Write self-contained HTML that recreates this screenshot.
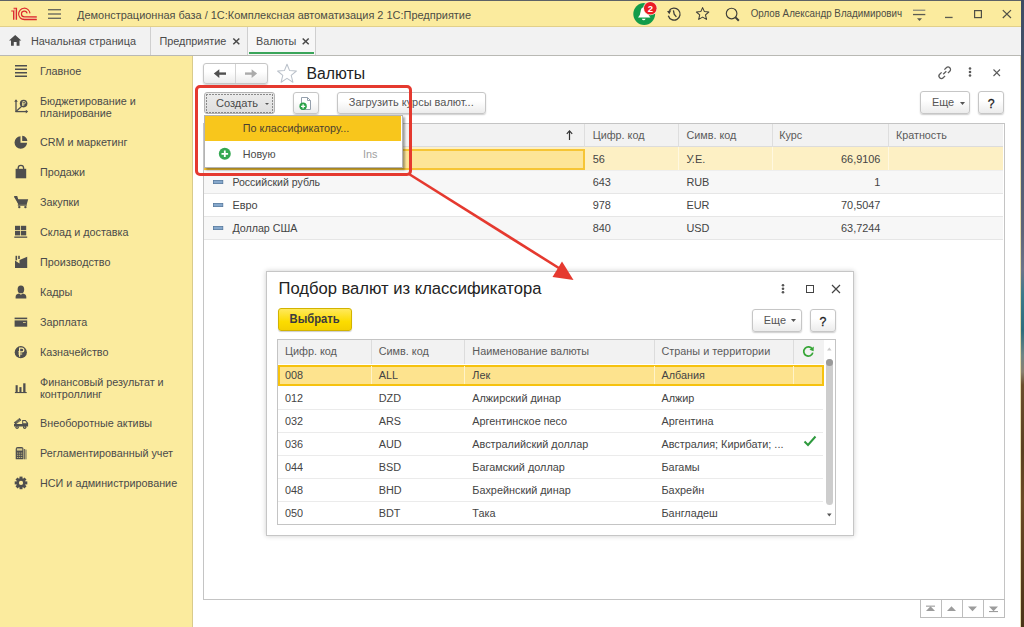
<!DOCTYPE html>
<html><head><meta charset="utf-8">
<style>
*{margin:0;padding:0;box-sizing:border-box}
html,body{width:1024px;height:627px;overflow:hidden;background:#fff;font-family:"Liberation Sans",sans-serif;color:#4a4a4a}
.a{position:absolute}
.t{position:absolute;white-space:nowrap;line-height:1;transform:scaleY(1.06);transform-origin:0 84.65%}
.nb{transform:none}
svg{position:absolute;overflow:visible}
#topline{left:0;top:0;width:1024px;height:1px;background:#5d6266}
#hdr{left:0;top:1px;width:1021px;height:26px;background:#fbeb9e;border-bottom:1px solid #e2d08a}
#tabs{left:0;top:27px;width:1021px;height:29px;background:#f2f2f2;border-bottom:1px solid #b9b9b4}
#side{left:0;top:56px;width:193px;height:571px;background:#fbeb9e;border-right:1px solid #d9cb8c}
#rstrip{left:1021px;top:0;width:3px;height:627px;background:linear-gradient(#3d4b63 0px,#475770 120px,#5e6478 230px,#6c7489 270px,#3b7a8a 295px,#2d6d7d 330px,#6f8585 355px,#8a8070 372px,#6a4e2c 385px,#5a4020 450px,#6b4a25 500px,#4a3418 627px)}
#rline{left:1020px;top:56px;width:1px;height:571px;background:#e4dcb0}
.side .t{font-size:10.8px;color:#4a4a4a}
.btn{position:absolute;border:1px solid #c6c6c6;border-radius:3px;background:linear-gradient(#fff 40%,#ececec);box-shadow:0 1px 1.5px rgba(0,0,0,.2)}
.th{font-size:10.7px;color:#5a5a5a}
.td{font-size:10.7px;color:#444}
</style></head><body>
<div class="a" id="topline"></div>
<div class="a" id="hdr"></div>
<div class="a" id="tabs"></div>
<div class="a" id="side"></div>
<div class="a" id="rline"></div>
<div class="a" id="rstrip"></div>

<!-- header -->
<svg style="left:0;top:0" width="40" height="27" viewBox="0 0 40 27">
 <path d="M13.6 8.2 H16.5 V19.6 H13.6 Z" fill="#f0b38a"/>
 <path d="M24.3 16.8 H36.7 V19.6 H24.3 A5.7 5.7 0 0 1 22 19 Z" fill="#f0b38a"/>
 <g fill="none" stroke="#dc2a2e" stroke-width="1.15">
  <path d="M11.2 11 H13.6 V19.7"/>
  <path d="M13.6 8.2 H16.5 V19.7"/>
  <path d="M30 13.4 A5.7 5.7 0 1 0 24.3 19.6 H36.8"/>
  <path d="M27.1 13.4 A2.85 2.85 0 1 0 24.3 16.8 H36.8"/>
 </g>
</svg>
<svg style="left:48px;top:9px" width="14" height="11"><g fill="#6b6b5e"><rect x="0" y="0" width="13" height="1.4"/><rect x="0" y="4.3" width="13" height="1.4"/><rect x="0" y="8.6" width="13" height="1.4"/></g></svg>
<div class="t" style="left:77px;top:9.9px;font-size:10.96px;color:#4d4d45">Демонстрационная база / 1С:Комплексная автоматизация 2 1С:Предприятие</div>

<svg style="left:0;top:0" width="1024" height="27" viewBox="0 0 1024 27">
 <circle cx="644.2" cy="14" r="10.9" fill="#129c4a"/>
 <path d="M638 17.6 Q640.3 15.5 640.6 11.5 Q640.9 7.2 644.2 7.2 Q647.5 7.2 647.8 11.5 Q648.1 15.5 650.4 17.6 Z" fill="#fff"/>
 <path d="M641.8 18.7 H645.6 Q645 20.2 643.7 20.2 Q642.4 20.2 641.8 18.7 Z" fill="#fff"/>
 <circle cx="650.3" cy="8.2" r="7" fill="#f4f0d8"/>
 <circle cx="650.3" cy="8.2" r="6.3" fill="#ec1c24"/>
 <text x="650.4" y="11.6" font-size="9.5" font-weight="bold" fill="#fff" text-anchor="middle" font-family="Liberation Sans">2</text>
 <g fill="none" stroke="#3f3f3a" stroke-width="1.3">
  <path d="M669.2 10.6 A6 6 0 1 1 668.3 15.8"/>
  <path d="M673.4 10.3 L674.2 14.2 L676.4 16.8"/>
  <path d="M702.6 7.6 L704.4 11.6 L708.8 12 L705.5 14.9 L706.5 19.4 L702.6 17.1 L698.7 19.4 L699.7 14.9 L696.4 12 L700.8 11.6 Z" stroke-width="1.05" stroke-linejoin="round"/>
  <circle cx="731.6" cy="13.5" r="5.3" stroke-width="1.15"/>
 </g>
 <path d="M667 11.2 L671.3 10.2 L669.4 14.2 Z" fill="#3f3f3a"/>
 <path d="M735.5 17.4 L738.8 20.7" stroke="#3f3f3a" stroke-width="2"/>
 <g fill="#5b5b52">
  <rect x="913" y="9.6" width="12.3" height="1.3" fill="#8a8a78"/>
  <rect x="913" y="13.9" width="12.3" height="1.3"/>
  <path d="M917 18.2 H922 L919.5 21 Z"/>
  <rect x="945" y="16.8" width="7.6" height="1.3"/>
 </g>
 <rect x="974.6" y="10.6" width="6.8" height="7" fill="none" stroke="#4f4f46" stroke-width="1.2"/>
 <path d="M1002.8 10.1 L1011 18 M1011 10.1 L1002.8 18" stroke="#4f4f46" stroke-width="1.2"/>
</svg>
<div class="t" style="left:750.7px;top:9.4px;font-size:9.8px;color:#4d4d45">Орлов Александр Владимирович</div>

<!-- tabs -->
<svg style="left:9px;top:35px" width="13" height="11" viewBox="0 0 13 11"><path d="M6.2 0 L12.3 5.5 H10.5 V10.7 H7.6 V7 H4.8 V10.7 H2 V5.5 H0 Z" fill="#4a4a4a"/></svg>
<div class="t" style="left:31px;top:36.1px;font-size:10.85px;color:#4a4a4a">Начальная страница</div>
<div class="a" style="left:150px;top:27px;width:1px;height:28px;background:#cfcfcf"></div>
<div class="t" style="left:159.5px;top:36.1px;font-size:10.85px;color:#4a4a4a">Предприятие</div>
<svg style="left:232px;top:37px" width="9" height="9"><path d="M1.3 1.5 L7.3 7.3 M7.3 1.5 L1.3 7.3" stroke="#4a4a4a" stroke-width="1.5"/></svg>
<div class="a" style="left:247px;top:27px;width:69px;height:28px;background:#f7f7f7;border-left:1px solid #cfcfcf;border-right:1px solid #cfcfcf"></div>
<div class="a" style="left:248.5px;top:52px;width:65px;height:2px;background:#3aa55a"></div>
<div class="t" style="left:256px;top:36.1px;font-size:10.85px;color:#4a4a4a">Валюты</div>
<svg style="left:302px;top:37px" width="9" height="9"><path d="M0.7 1.5 L6.7 7.3 M6.7 1.5 L0.7 7.3" stroke="#4a4a4a" stroke-width="1.5"/></svg>

<!-- sidebar -->
<div class="side">
<div class="t" style="left:40px;top:65.8px">Главное</div>
<div class="t" style="left:40px;top:95.6px">Бюджетирование и</div>
<div class="t" style="left:40px;top:107.8px">планирование</div>
<div class="t" style="left:40px;top:136.9px">CRM и маркетинг</div>
<div class="t" style="left:40px;top:167.0px">Продажи</div>
<div class="t" style="left:40px;top:197.2px">Закупки</div>
<div class="t" style="left:40px;top:227.0px">Склад и доставка</div>
<div class="t" style="left:40px;top:257.1px">Производство</div>
<div class="t" style="left:40px;top:287.4px">Кадры</div>
<div class="t" style="left:40px;top:317.2px">Зарплата</div>
<div class="t" style="left:40px;top:347.2px">Казначейство</div>
<div class="t" style="left:40px;top:376.6px">Финансовый результат и</div>
<div class="t" style="left:40px;top:389.4px">контроллинг</div>
<div class="t" style="left:40px;top:418.0px">Внеоборотные активы</div>
<div class="t" style="left:40px;top:448.1px">Регламентированный учет</div>
<div class="t" style="left:40px;top:478.4px">НСИ и администрирование</div>
</div>



<!-- sidebar icons -->
<svg style="left:0;top:0" width="193" height="627">
<g fill="#4e4e4e">
 <!-- Главное -->
 <rect x="15" y="65" width="12" height="1.5"/><rect x="15" y="68.5" width="12" height="1.5"/><rect x="15" y="72" width="12" height="1.5"/><rect x="15" y="75.5" width="12" height="1.5"/>
 <!-- budget -->
 <path d="M16 112 V100.5" stroke="#4e4e4e" stroke-width="1.3"/><path d="M14.2 101.8 L16 99.2 L17.8 101.8 Z"/>
 <path d="M15.5 111.6 H26.5" stroke="#4e4e4e" stroke-width="1.3"/><path d="M25.8 109.8 L28.2 111.6 L25.8 113.4 Z"/>
 <path d="M16 111.5 L22 106" stroke="#4e4e4e" stroke-width="1.1"/>
 <circle cx="23.6" cy="103.6" r="3.8"/>
 <path d="M22.8 106 V101.6 H24.3 A1.1 1.1 0 0 1 24.3 103.8 H22 M22 105 H24.4" stroke="#fbeb9e" stroke-width="0.8" fill="none"/>
 <!-- pie -->
 <path d="M20.5 136.2 V142.8 H27.1 A6.3 6.3 0 1 1 20.5 136.2 Z"/>
 <path d="M22.2 135.8 A6 6 0 0 1 27.4 141.1 H22.2 Z"/>
 <!-- bag -->
 <path d="M15.6 168.8 H26.2 V178.3 H15.6 Z"/>
 <path d="M18.2 170 V168 A2.7 2.7 0 0 1 23.6 168 V170" fill="none" stroke="#4e4e4e" stroke-width="1.3"/>
 <!-- cart -->
 <path d="M14 196.8 H16.6 L17.6 199.3 H28.2 L26.6 204.8 H18.6 Z"/>
 <path d="M14.2 196.6 H16.8 L19 204.5" fill="none" stroke="#4e4e4e" stroke-width="1.2"/>
 <rect x="17.8" y="204.5" width="9" height="1.2"/>
 <circle cx="19.3" cy="207.1" r="1.2"/><circle cx="25.4" cy="207.1" r="1.2"/>
 <!-- sklad -->
 <rect x="15" y="225.8" width="5.2" height="4.4"/><rect x="21" y="225.8" width="5.2" height="4.4"/>
 <rect x="15" y="231" width="5.2" height="4.4"/><rect x="21" y="231" width="5.2" height="4.4"/>
 <rect x="14.3" y="236.5" width="12.9" height="1.3"/>
 <!-- factory -->
 <path d="M15 268 V260.5 L19.5 263.5 V260 L27.2 256.8 V268 Z"/>
 <rect x="15.5" y="255.8" width="1.6" height="4.5"/><rect x="18.2" y="255.8" width="1.6" height="3.2"/>
 <!-- person -->
 <path d="M17.6 289.4 A3.3 3.9 0 0 1 24.2 289.4 A3.3 3.9 0 0 1 17.6 289.4 Z"/>
 <path d="M15.6 298.4 V296.8 Q15.8 294.2 19 293.6 L20.9 294.8 L22.8 293.6 Q26 294.2 26.3 296.8 V298.4 Z"/>
 <!-- card -->
 <rect x="14.6" y="317.6" width="12.6" height="1.6"/>
 <path d="M14.6 320.4 H27.2 V326.7 H14.6 Z"/>
 <rect x="23" y="322" width="2.8" height="1" fill="#c9bd85"/>
 <!-- ruble coin -->
 <circle cx="20.8" cy="352.2" r="6.1"/>
 <path d="M19.6 356.8 V348.1 H21.9 A1.9 1.9 0 0 1 21.9 351.9 H18.3 M18.3 354 H22.2" fill="none" stroke="#fbeb9e" stroke-width="1.2"/>
 <!-- bars -->
 <rect x="15.6" y="385.2" width="2.1" height="7"/><rect x="19.4" y="387.1" width="2.1" height="5.1"/><rect x="23.2" y="383.3" width="2.3" height="8.9"/>
 <rect x="14.9" y="392" width="11.8" height="1.1"/>
 <!-- truck -->
 <path d="M13.9 422.6 L19.6 417.9 L21.3 420.3 L15.6 424.6 Z"/>
 <path d="M15.6 421.6 L19 418.9 M16.5 422.8 L20 420" stroke="#bdb27c" stroke-width="0.5"/>
 <path d="M22.2 420 H25.6 L28.1 423 V426.4 H14 V424 H22.2 Z"/>
 <path d="M23.2 421 H25.2 L26.8 423.2 H23.2 Z" fill="#f1e29a"/>
 <circle cx="17.1" cy="427.2" r="1.7"/><circle cx="24.7" cy="427.2" r="1.7"/>
 <circle cx="17.1" cy="427.2" r="0.6" fill="#d8cc8e"/><circle cx="24.7" cy="427.2" r="0.6" fill="#d8cc8e"/>
 <!-- calculator -->
 <path d="M15.7 449 Q15.7 447 17.7 447 H21.5 Q23.5 447 23.5 449 V459.3 H15.7 Z"/>
 <rect x="16.9" y="448.4" width="5.4" height="2.2" fill="#d8cc8e"/>
 <g fill="#bdb27c"><rect x="17" y="452.6" width="1.3" height="1"/><rect x="19" y="452.6" width="1.3" height="1"/><rect x="21" y="452.6" width="1.3" height="1"/>
 <rect x="17" y="454.8" width="1.3" height="1"/><rect x="19" y="454.8" width="1.3" height="1"/><rect x="21" y="454.8" width="1.3" height="1"/>
 <rect x="17" y="457" width="1.3" height="1"/><rect x="19" y="457" width="1.3" height="1"/><rect x="21" y="457" width="1.3" height="1"/></g>
 <rect x="24.2" y="449" width="0.9" height="10.3"/><rect x="25.6" y="449.6" width="0.8" height="9.7"/>
 <!-- gear -->
 <g transform="translate(21 482.9)">
  <circle r="4.6"/>
  <g><rect x="-1.5" y="-6.3" width="3" height="12.6"/><rect x="-1.5" y="-6.3" width="3" height="12.6" transform="rotate(45)"/><rect x="-1.5" y="-6.3" width="3" height="12.6" transform="rotate(90)"/><rect x="-1.5" y="-6.3" width="3" height="12.6" transform="rotate(135)"/></g>
  <circle r="2.1" fill="#fbeb9e"/>
 </g>
</g>
</svg>

<!-- main form -->
<div class="btn" style="left:203px;top:63px;width:65px;height:21px;border-radius:3px"></div>
<div class="a" style="left:235px;top:64px;width:1px;height:19px;background:#d4d4d4"></div>
<svg style="left:0;top:0" width="300" height="100"><path d="M218 73.6 H226" stroke="#505050" stroke-width="2.4"/><path d="M213.8 73.6 L219.3 69.2 V78 Z" fill="#505050"/><path d="M245 73.6 H253" stroke="#ababab" stroke-width="2.4"/><path d="M257.1 73.6 L251.6 69.2 V78 Z" fill="#ababab"/></svg>
<svg style="left:276px;top:63px" width="22" height="21" viewBox="0 0 22 21"><path d="M11 1.2 L13.6 7.6 L20.4 8 L15.2 12.4 L16.9 19.2 L11 15.4 L5.1 19.2 L6.8 12.4 L1.6 8 L8.4 7.6 Z" fill="none" stroke="#bac1ca" stroke-width="1.05" stroke-linejoin="round"/></svg>
<div class="t nb" style="left:306.5px;top:65.9px;font-size:15.8px;color:#222">Валюты</div>
<svg style="left:937px;top:65px" width="16" height="16" viewBox="0 0 16 16"><g fill="none" stroke="#5c5c5c" stroke-width="1.25"><path d="M6.2 9.3 L9.3 6.2"/><path d="M7.4 4.6 L9.3 2.7 A2.4 2.4 0 0 1 12.8 6.2 L10.9 8.1"/><path d="M8.1 10.9 L6.2 12.8 A2.4 2.4 0 0 1 2.7 9.3 L4.6 7.4"/></g></svg>
<svg style="left:968px;top:67px" width="5" height="11"><g fill="#5a5a5a"><circle cx="2" cy="1.5" r="1.3"/><circle cx="2" cy="5" r="1.3"/><circle cx="2" cy="8.5" r="1.3"/></g></svg>
<svg style="left:993px;top:69px" width="8" height="8"><path d="M0.5 0.5 L7 7 M7 0.5 L0.5 7" stroke="#5a5a5a" stroke-width="1.1"/></svg>

<div class="a" style="left:204px;top:92px;width:71px;height:22px;border:1px solid #b4b4b4;border-radius:3px;background:linear-gradient(#ececec,#dedede)"></div>
<div class="a" style="left:206px;top:94px;width:67px;height:1px;background:repeating-linear-gradient(90deg,#8a8a8a 0 2px,transparent 2px 3px)"></div>
<div class="a" style="left:206px;top:112px;width:67px;height:1px;background:repeating-linear-gradient(90deg,#8a8a8a 0 2px,transparent 2px 3px)"></div>
<div class="a" style="left:206px;top:94px;width:1px;height:19px;background:repeating-linear-gradient(180deg,#8a8a8a 0 2px,transparent 2px 3px)"></div>
<div class="a" style="left:272px;top:94px;width:1px;height:19px;background:repeating-linear-gradient(180deg,#8a8a8a 0 2px,transparent 2px 3px)"></div>
<div class="t" style="left:215.9px;top:97.5px;font-size:11.08px;color:#4a4a4a">Создать</div>
<svg style="left:265px;top:102.5px" width="5" height="3"><path d="M0 0 H4 L2 2 Z" fill="#555"/></svg>
<div class="btn" style="left:293px;top:92px;width:26px;height:22px"></div>
<svg style="left:296px;top:95px" width="18" height="17" viewBox="0 0 18 17"><path d="M5.5 2.5 H11.5 L14.5 5.5 V14.5 H5.5 Z" fill="#fff" stroke="#95a0ad" stroke-width="1"/><path d="M11.5 2.5 V5.5 H14.5" fill="none" stroke="#95a0ad"/><circle cx="7.1" cy="11.3" r="3.7" fill="#2aa249"/><path d="M7.1 9.2 V13.4 M5 11.3 H9.2" stroke="#fff" stroke-width="1.3"/></svg>
<div class="btn" style="left:337px;top:92px;width:149px;height:22px"></div>
<div class="t" style="left:348.8px;top:97.3px;font-size:10.96px;color:#555">Загрузить курсы валют...</div>
<div class="btn" style="left:920px;top:91px;width:50px;height:23px"></div>
<div class="t" style="left:932px;top:97.3px;font-size:10.9px;color:#555">Еще</div>
<svg style="left:960px;top:102px" width="6" height="4"><path d="M0 0 H5 L2.5 3 Z" fill="#555"/></svg>
<div class="btn" style="left:978px;top:91px;width:26px;height:23px"></div>
<div class="t" style="left:987.8px;top:98.2px;font-size:12.3px;color:#1a1a1a;-webkit-text-stroke:0.25px #1a1a1a">?</div>

<!-- table -->
<div class="a" style="left:203px;top:123px;width:802px;height:477px;border:1px solid #c4c4c4;background:#fff"></div>
<div class="a" style="left:204px;top:124px;width:799px;height:23px;background:#f2f2f2;border-bottom:1px solid #dcdcdc"></div>
<div class="a" style="left:584px;top:124px;width:1px;height:23px;background:#dedede"></div>
<div class="a" style="left:678px;top:124px;width:1px;height:23px;background:#dedede"></div>
<div class="a" style="left:772px;top:124px;width:1px;height:23px;background:#dedede"></div>
<div class="a" style="left:888px;top:124px;width:1px;height:23px;background:#dedede"></div>
<svg style="left:566px;top:130px" width="7" height="11"><path d="M3.5 1 V10" stroke="#333" stroke-width="1.2"/><path d="M0.8 3.8 L3.5 0.8 L6.2 3.8" fill="none" stroke="#333" stroke-width="1.2"/></svg>
<div class="t th" style="left:592.7px;top:129.8px;font-size:10.8px">Цифр. код</div>
<div class="t th" style="left:686.4px;top:129.8px;font-size:10.8px">Симв. код</div>
<div class="t th" style="left:779.3px;top:129.8px;font-size:10.8px">Курс</div>
<div class="t th" style="left:895.9px;top:129.8px;font-size:10.8px">Кратность</div>

<div class="a" style="left:204px;top:147px;width:799px;height:24px;background:#fdf0c4;border-bottom:1px solid #eee"></div>
<div class="a" style="left:204px;top:148.6px;width:381px;height:21px;background:#fde597;border:2px solid #f6c535"></div>
<div class="a" style="left:678px;top:147px;width:1px;height:23px;background:#fff8e0"></div>
<div class="a" style="left:772px;top:147px;width:1px;height:23px;background:#fff8e0"></div>
<div class="a" style="left:888px;top:147px;width:1px;height:23px;background:#fff8e0"></div>
<div class="a" style="left:204px;top:171px;width:799px;height:23px;background:#f7f7f7;border-bottom:1px solid #e6e6e6"></div>
<div class="a" style="left:204px;top:194px;width:799px;height:23px;background:#fff;border-bottom:1px solid #e6e6e6"></div>
<div class="a" style="left:204px;top:217px;width:799px;height:23px;background:#f7f7f7;border-bottom:1px solid #e6e6e6"></div>

<div class="t td" style="left:592.7px;top:153.8px;font-size:10.9px">56</div>
<div class="t td" style="left:686.4px;top:153.8px;font-size:10.9px">У.Е.</div>
<div class="t td" style="left:780px;top:153.8px;width:100.4px;text-align:right;font-size:10.9px">66,9106</div>

<svg style="left:213px;top:180px" width="12" height="6"><rect x="0.4" y="0.4" width="9.4" height="3.2" fill="#86a8cc" stroke="#56789e" stroke-width="0.8"/></svg>
<div class="t td" style="left:232.4px;top:177px;font-size:10.56px">Российский рубль</div>
<div class="t td" style="left:592.7px;top:176.6px;font-size:10.9px">643</div>
<div class="t td" style="left:686.4px;top:176.6px;font-size:10.9px">RUB</div>
<div class="t td" style="left:780px;top:176.6px;width:100.4px;text-align:right;font-size:10.9px">1</div>

<svg style="left:213px;top:203px" width="12" height="6"><rect x="0.4" y="0.4" width="9.4" height="3.2" fill="#86a8cc" stroke="#56789e" stroke-width="0.8"/></svg>
<div class="t td" style="left:232.4px;top:200px;font-size:10.9px">Евро</div>
<div class="t td" style="left:592.7px;top:199.7px;font-size:10.9px">978</div>
<div class="t td" style="left:686.4px;top:199.7px;font-size:10.9px">EUR</div>
<div class="t td" style="left:780px;top:199.7px;width:100.4px;text-align:right;font-size:10.9px">70,5047</div>

<svg style="left:213px;top:226px" width="12" height="6"><rect x="0.4" y="0.4" width="9.4" height="3.2" fill="#86a8cc" stroke="#56789e" stroke-width="0.8"/></svg>
<div class="t td" style="left:232.4px;top:223px;font-size:10.7px">Доллар США</div>
<div class="t td" style="left:592.7px;top:222.7px;font-size:10.9px">840</div>
<div class="t td" style="left:686.4px;top:222.7px;font-size:10.9px">USD</div>
<div class="t td" style="left:780px;top:222.7px;width:100.4px;text-align:right;font-size:10.9px">63,7244</div>

<!-- bottom nav -->
<div class="a" style="left:920px;top:599px;width:85px;height:19px;border:1px solid #bdbdbd;background:#fff"></div>
<div class="a" style="left:941px;top:599px;width:1px;height:19px;background:#bdbdbd"></div>
<div class="a" style="left:962px;top:599px;width:1px;height:19px;background:#bdbdbd"></div>
<div class="a" style="left:983px;top:599px;width:1px;height:19px;background:#bdbdbd"></div>
<svg style="left:0;top:0" width="1024" height="627"><g fill="#9c9c9c">
<rect x="926" y="605.6" width="9" height="1.1"/><path d="M926 611 L930.5 606.2 L935 611 Z"/>
<path d="M947 611 L951.5 606.2 L956 611 Z"/>
<path d="M968 606.5 L972.5 611.2 L977 606.5 Z"/>
<path d="M989 606.5 L993.5 611.2 L998 606.5 Z"/><rect x="989" y="611" width="9" height="1.1"/>
</g></svg>
<!-- dropdown menu -->
<div class="a" style="left:203.5px;top:115px;width:199px;height:53px;background:#fff;border:1px solid #b4b4b4;box-shadow:2px 2px 2px rgba(0,0,0,.35)"></div>
<div class="a" style="left:205px;top:116px;width:196px;height:25px;background:#f8c61c"></div>
<div class="t" style="left:242.8px;top:122.8px;font-size:10.8px;color:#4a4030">По классификатору...</div>
<svg style="left:218px;top:147.2px" width="14" height="14"><circle cx="6.8" cy="6.8" r="6" fill="#35a853"/><path d="M6.8 3.5 V10.1 M3.5 6.8 H10.1" stroke="#fff" stroke-width="1.8"/></svg>
<div class="t" style="left:242.8px;top:148.8px;font-size:10.8px;color:#4a4a4a">Новую</div>
<div class="t" style="left:363px;top:148.8px;font-size:10.8px;color:#a0a0a0">Ins</div>


<!-- dialog -->
<div class="a" style="left:266px;top:270.5px;width:588px;height:265px;background:#fff;border:1px solid #c6c6c6;box-shadow:0 0 5px rgba(0,0,0,.2)"></div>
<div class="t nb" style="left:278.5px;top:281.3px;font-size:16.58px;color:#222">Подбор валют из классификатора</div>
<svg style="left:781px;top:283px" width="5" height="11"><g fill="#555"><circle cx="2" cy="2.2" r="1.3"/><circle cx="2" cy="5.7" r="1.3"/><circle cx="2" cy="9.2" r="1.3"/></g></svg>
<div class="a" style="left:806px;top:285px;width:8px;height:8px;border:1.3px solid #444"></div>
<svg style="left:831px;top:284px" width="10" height="10"><path d="M1 1 L9 9 M9 1 L1 9" stroke="#444" stroke-width="1.2"/></svg>
<div class="a" style="left:277.5px;top:308px;width:74.5px;height:23px;border:1px solid #d2b300;border-radius:3px;background:linear-gradient(#ffe95c,#fcdc00 60%,#f4d000);box-shadow:0 1px 1px rgba(0,0,0,.2)"></div>
<div class="t" style="left:289.6px;top:313.8px;font-size:11.2px;font-weight:bold;color:#3a3a40">Выбрать</div>
<div class="btn" style="left:752px;top:308.5px;width:50px;height:23px"></div>
<div class="t" style="left:763.8px;top:314.6px;font-size:10.9px;color:#555">Еще</div>
<svg style="left:791px;top:319px" width="6" height="4"><path d="M0 0 H5 L2.5 3 Z" fill="#555"/></svg>
<div class="btn" style="left:810px;top:308.5px;width:26px;height:23px"></div>
<div class="t" style="left:819.4px;top:315.8px;font-size:12.3px;color:#1a1a1a;-webkit-text-stroke:0.25px #1a1a1a">?</div>

<div class="a" style="left:277px;top:339px;width:559px;height:186px;border:1px solid #c4c4c4;background:#fff"></div>
<div class="a" style="left:278px;top:340px;width:546px;height:23.5px;background:#f2f2f2"></div>
<div class="a" style="left:371px;top:340px;width:1px;height:24px;background:#dcdcdc"></div>
<div class="a" style="left:464px;top:340px;width:1px;height:24px;background:#dcdcdc"></div>
<div class="a" style="left:654px;top:340px;width:1px;height:24px;background:#dcdcdc"></div>
<div class="a" style="left:793px;top:340px;width:1px;height:24px;background:#dcdcdc"></div>
<div class="t th" style="left:284.9px;top:346.3px;font-size:10.85px">Цифр. код</div>
<div class="t th" style="left:378.7px;top:346.3px;font-size:10.85px">Симв. код</div>
<div class="t th" style="left:472.3px;top:346.3px;font-size:10.85px">Наименование валюты</div>
<div class="t th" style="left:661.5px;top:346.3px;font-size:10.85px">Страны и территории</div>
<svg style="left:802px;top:345px" width="13" height="13" viewBox="0 0 13 13"><path d="M10.3 4.2 A4.6 4.6 0 1 0 10.8 7.6" fill="none" stroke="#35a535" stroke-width="1.7"/><path d="M7.5 4.8 L11.8 1.5 L11.6 6.2 Z" fill="#35a535"/></svg>
<div class="a" style="left:278px;top:409px;width:545px;height:1px;background:#ebebeb"></div>
<div class="a" style="left:278px;top:432px;width:545px;height:1px;background:#ebebeb"></div>
<div class="a" style="left:278px;top:455px;width:545px;height:1px;background:#ebebeb"></div>
<div class="a" style="left:278px;top:478px;width:545px;height:1px;background:#ebebeb"></div>
<div class="a" style="left:278px;top:501px;width:545px;height:1px;background:#ebebeb"></div>
<div class="a" style="left:278px;top:364.8px;width:546px;height:21px;background:#fde38e;border:2px solid #f6c20f"></div>
<div class="a" style="left:371px;top:366px;width:1px;height:18px;background:#fff3c8"></div>
<div class="a" style="left:464px;top:366px;width:1px;height:18px;background:#fff3c8"></div>
<div class="a" style="left:654px;top:366px;width:1px;height:18px;background:#fff3c8"></div>
<div class="a" style="left:793px;top:366px;width:1px;height:18px;background:#fff3c8"></div>
<div class="t td" style="left:284.9px;top:370.32px;font-size:10.85px">008</div><div class="t td" style="left:378.7px;top:370.32px;font-size:10.85px">ALL</div><div class="t td" style="left:472.3px;top:370.32px;font-size:10.85px">Лек</div><div class="t td" style="left:661.5px;top:370.32px;font-size:10.85px">Албания</div>
<div class="t td" style="left:284.9px;top:393.42px;font-size:10.85px">012</div><div class="t td" style="left:378.7px;top:393.42px;font-size:10.85px">DZD</div><div class="t td" style="left:472.3px;top:393.42px;font-size:10.85px">Алжирский динар</div><div class="t td" style="left:661.5px;top:393.42px;font-size:10.85px">Алжир</div>
<div class="t td" style="left:284.9px;top:416.42px;font-size:10.85px">032</div><div class="t td" style="left:378.7px;top:416.42px;font-size:10.85px">ARS</div><div class="t td" style="left:472.3px;top:416.42px;font-size:10.85px">Аргентинское песо</div><div class="t td" style="left:661.5px;top:416.42px;font-size:10.85px">Аргентина</div>
<div class="t td" style="left:284.9px;top:439.42px;font-size:10.85px">036</div><div class="t td" style="left:378.7px;top:439.42px;font-size:10.85px">AUD</div><div class="t td" style="left:472.3px;top:439.42px;font-size:10.85px">Австралийский доллар</div><div class="t td" style="left:661.5px;top:439.42px;font-size:10.85px">Австралия; Кирибати; ...</div>
<div class="t td" style="left:284.9px;top:462.42px;font-size:10.85px">044</div><div class="t td" style="left:378.7px;top:462.42px;font-size:10.85px">BSD</div><div class="t td" style="left:472.3px;top:462.42px;font-size:10.85px">Багамский доллар</div><div class="t td" style="left:661.5px;top:462.42px;font-size:10.85px">Багамы</div>
<div class="t td" style="left:284.9px;top:485.42px;font-size:10.85px">048</div><div class="t td" style="left:378.7px;top:485.42px;font-size:10.85px">BHD</div><div class="t td" style="left:472.3px;top:485.42px;font-size:10.85px">Бахрейнский динар</div><div class="t td" style="left:661.5px;top:485.42px;font-size:10.85px">Бахрейн</div>
<div class="t td" style="left:284.9px;top:508.42px;font-size:10.85px">050</div><div class="t td" style="left:378.7px;top:508.42px;font-size:10.85px">BDT</div><div class="t td" style="left:472.3px;top:508.42px;font-size:10.85px">Така</div><div class="t td" style="left:661.5px;top:508.42px;font-size:10.85px">Бангладеш</div>
<svg style="left:803px;top:435px" width="14" height="12"><path d="M1.5 6.5 L5 10 L12.5 1.5" fill="none" stroke="#2e9a3e" stroke-width="2"/></svg>
<svg style="left:826px;top:347px" width="7" height="5"><path d="M1 3.6 L3.3 0.6 L5.6 3.6 Z" fill="#cacaca"/></svg>
<div class="a" style="left:825.7px;top:359px;width:7px;height:146px;border-radius:3.5px;background:#cdcdcd"></div>
<div class="a" style="left:825.7px;top:359px;width:7px;height:7px;border-radius:50%;background:#9a9a9a"></div>
<svg style="left:826px;top:513px" width="7" height="5"><path d="M1 0.4 L3.3 3.4 L5.6 0.4 Z" fill="#555"/></svg>

<!-- red highlight + arrow -->
<div class="a" style="left:195px;top:85px;width:217px;height:91px;border:3.7px solid #e5392f;border-radius:5px"></div>
<svg style="left:0;top:0" width="1024" height="627"><path d="M409 174 L562 270" stroke="#e5392f" stroke-width="2.6"/><path d="M573.5 280 L552.5 277 L562 261.5 Z" fill="#e5392f"/></svg>

</body></html>
